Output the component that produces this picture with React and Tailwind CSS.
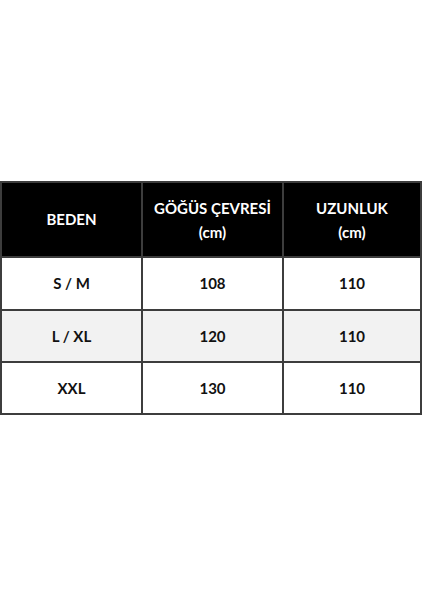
import React from 'react';

const rows = [
  { size: 'S / M', chest: '108', length: '110', bg: 'bg-white', h: 'h-[53px]' },
  { size: 'L / XL', chest: '120', length: '110', bg: 'bg-[#f2f2f2]', h: 'h-[52px]' },
  { size: 'XXL', chest: '130', length: '110', bg: 'bg-white', h: 'h-[52px]' },
];

export default function App() {
  return (
    <div className="w-[424px] h-[600px] bg-white pt-[181px] font-['Lato','Liberation_Sans',sans-serif]">
      <table className="w-[422px] border-collapse text-center font-bold text-[15px] text-[#111]">
        <thead>
          <tr className="h-[75px] bg-black text-white">
            <th className="w-[141px] border-2 border-[#3d3d3d] font-bold">BEDEN</th>
            <th className="w-[141px] border-2 border-[#3d3d3d] font-bold leading-[24px]">
              GÖĞÜS ÇEVRESİ
              <br />
              (cm)
            </th>
            <th className="border-2 border-[#3d3d3d] font-bold leading-[24px]">
              UZUNLUK
              <br />
              (cm)
            </th>
          </tr>
        </thead>
        <tbody>
          {rows.map((r) => (
            <tr key={r.size} className={`${r.h} ${r.bg}`}>
              <td className="border-2 border-[#3d3d3d]">{r.size}</td>
              <td className="border-2 border-[#3d3d3d]">{r.chest}</td>
              <td className="border-2 border-[#3d3d3d]">{r.length}</td>
            </tr>
          ))}
        </tbody>
      </table>
    </div>
  );
}
